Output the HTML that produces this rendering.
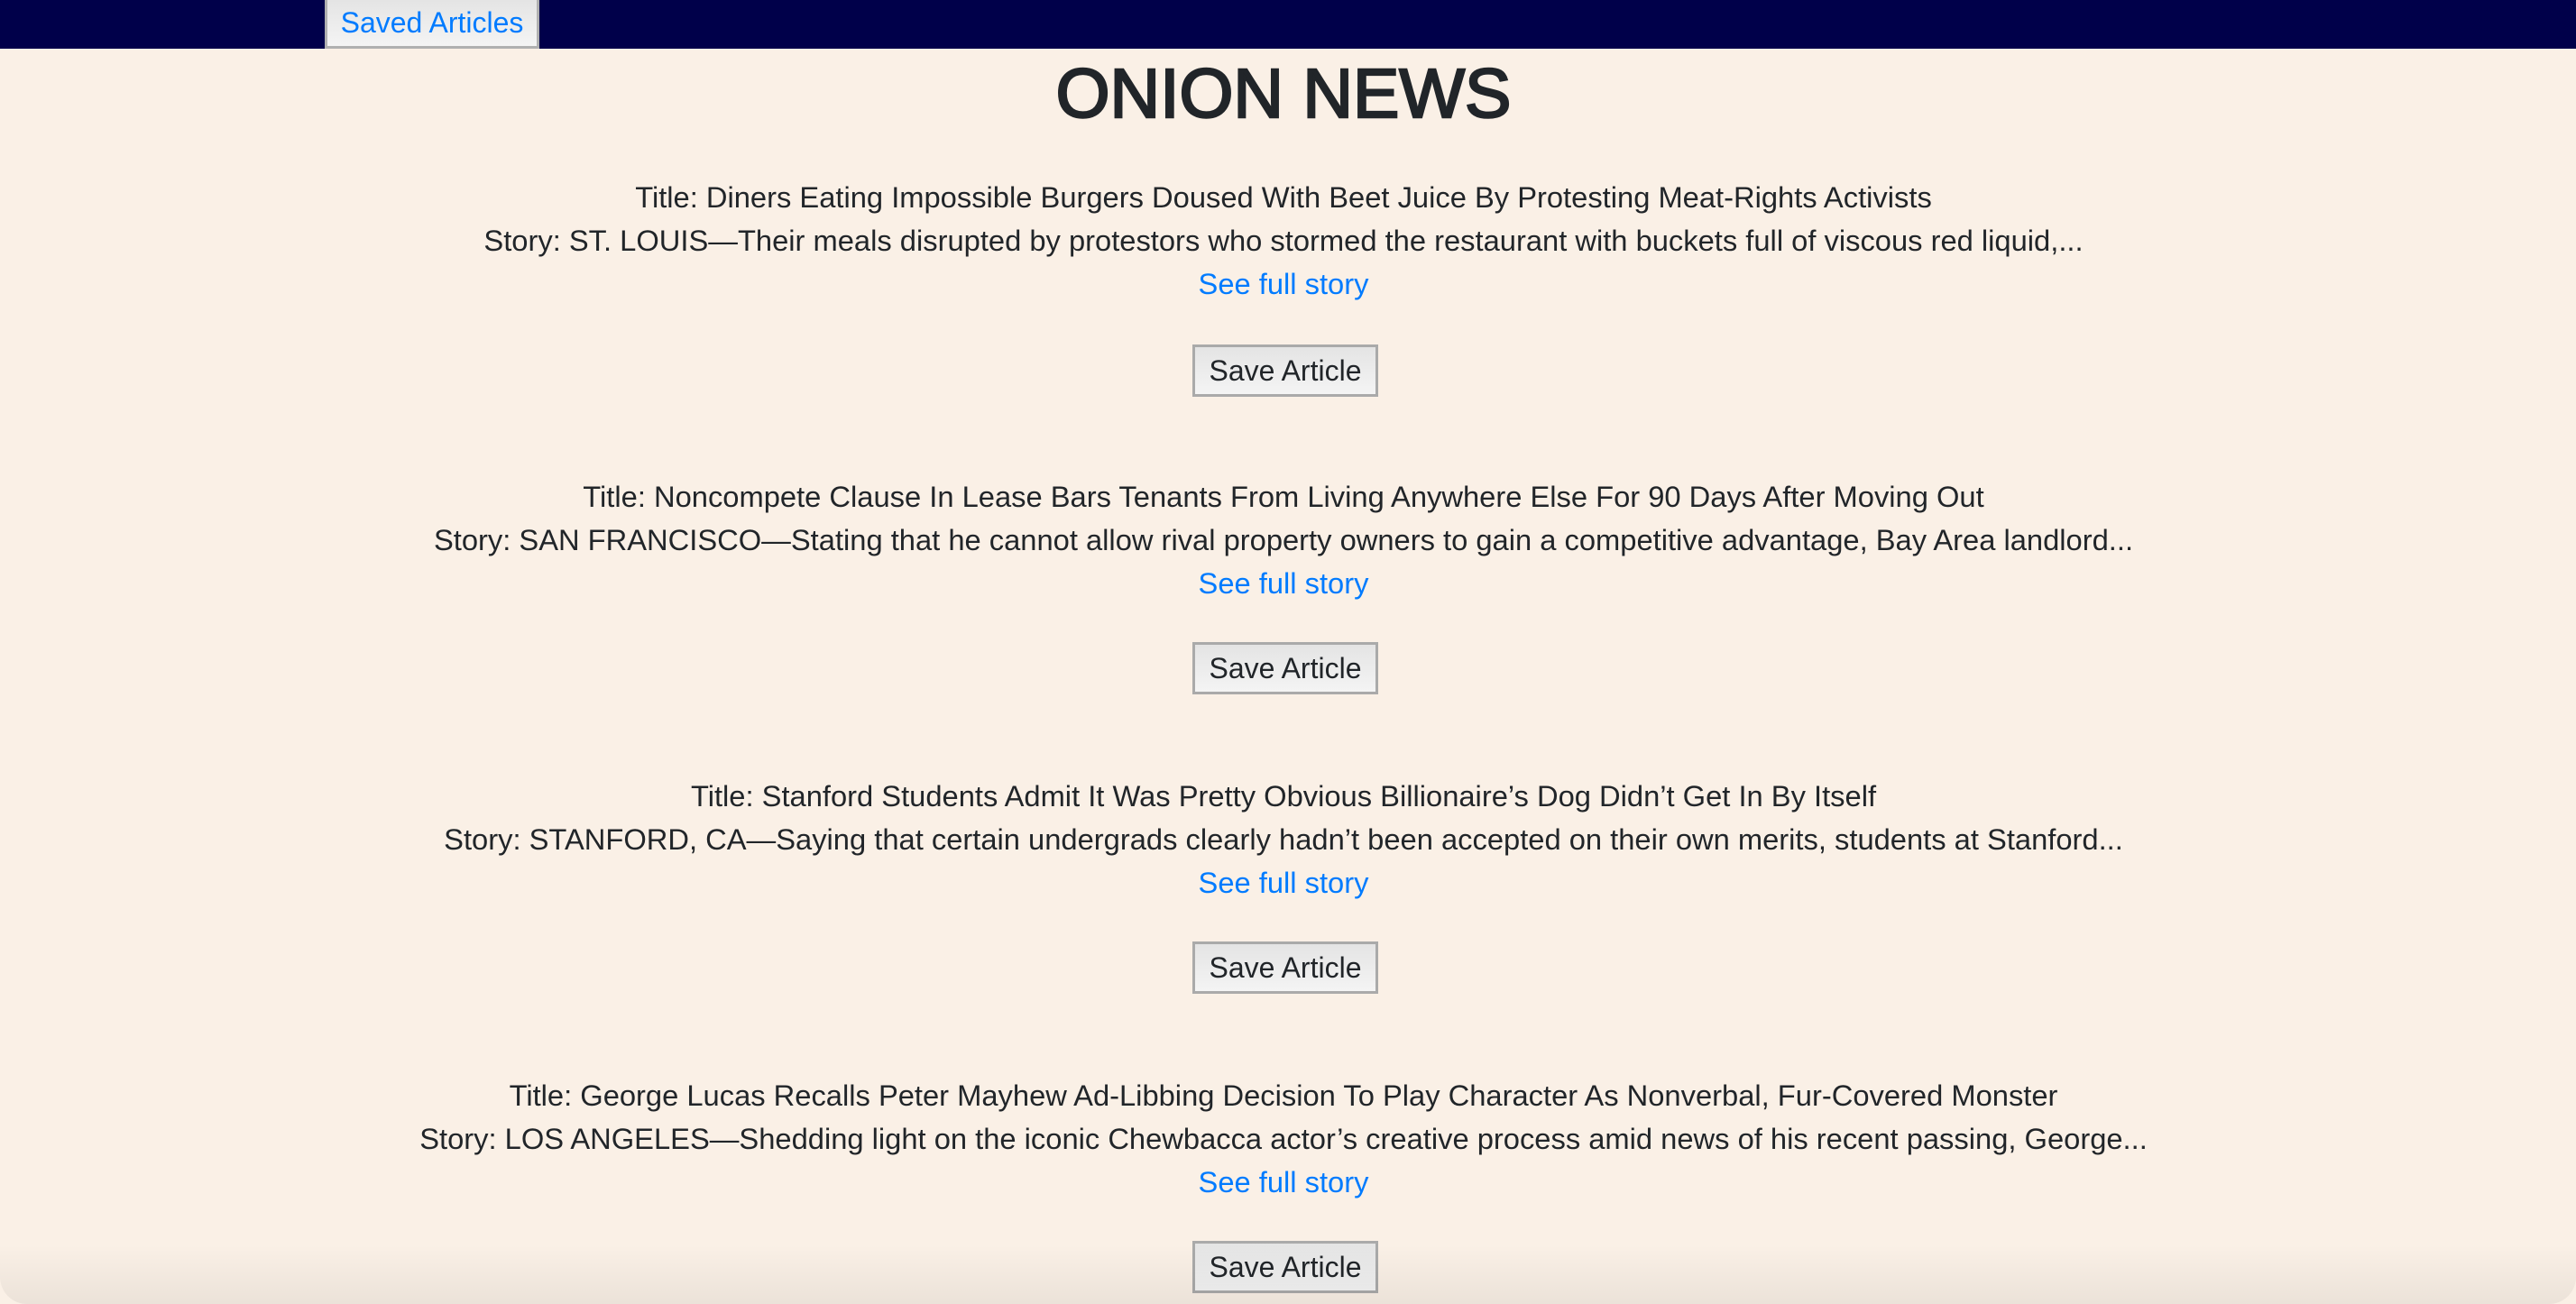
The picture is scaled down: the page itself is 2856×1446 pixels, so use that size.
<!DOCTYPE html>
<html><head><meta charset="utf-8"><style>
html,body{margin:0;padding:0}
body{width:2856px;height:1446px;background:#faf0e6;font-family:"Liberation Sans",sans-serif;color:#212529;position:relative;overflow:hidden}
.nav{position:absolute;left:0;top:0;width:2856px;height:54px;background:#00004a}
.navbtn{position:absolute;left:360px;top:0;width:238px;height:54px;box-sizing:border-box;border:3px solid #b0b0b0;border-top:0;background:linear-gradient(#e4e4e4,#f4f4f4);color:#007bff;font-size:32px;line-height:50px;text-align:center}
h1{position:absolute;left:0;width:2846px;top:58px;margin:0;text-align:center;font-size:77px;line-height:92px;font-weight:normal;color:#212529;-webkit-text-stroke:2.5px #212529}
.art{position:absolute;left:0;width:2846px;text-align:center;font-size:32.7px;line-height:48px}
.art a{color:#007bff;text-decoration:none}
.btn{position:absolute;left:1322px;width:206px;height:58px;box-sizing:border-box;border:3px solid #aaa;background:linear-gradient(#e4e4e4,#f4f4f4);font-size:32px;line-height:52px;text-align:center;color:#212529}
.shade{position:absolute;left:0;top:1380px;width:2856px;height:66px;background:linear-gradient(rgba(0,0,0,0),rgba(0,0,0,0.06));border-radius:0 0 30px 30px}
</style></head><body>
<div class="nav"><div class="navbtn">Saved Articles</div></div>
<h1>ONION NEWS</h1>

<div class="art" style="top:195px">Title: Diners Eating Impossible Burgers Doused With Beet Juice By Protesting Meat-Rights Activists<br>Story: ST. LOUIS—Their meals disrupted by protestors who stormed the restaurant with buckets full of viscous red liquid,...<br><a>See full story</a></div>
<div class="btn" style="top:382px">Save Article</div>

<div class="art" style="top:527px">Title: Noncompete Clause In Lease Bars Tenants From Living Anywhere Else For 90 Days After Moving Out<br>Story: SAN FRANCISCO—Stating that he cannot allow rival property owners to gain a competitive advantage, Bay Area landlord...<br><a>See full story</a></div>
<div class="btn" style="top:712px">Save Article</div>

<div class="art" style="top:859px">Title: Stanford Students Admit It Was Pretty Obvious Billionaire’s Dog Didn’t Get In By Itself<br>Story: STANFORD, CA—Saying that certain undergrads clearly hadn’t been accepted on their own merits, students at Stanford...<br><a>See full story</a></div>
<div class="btn" style="top:1044px">Save Article</div>

<div class="art" style="top:1191px">Title: George Lucas Recalls Peter Mayhew Ad-Libbing Decision To Play Character As Nonverbal, Fur-Covered Monster<br>Story: LOS ANGELES—Shedding light on the iconic Chewbacca actor’s creative process amid news of his recent passing, George...<br><a>See full story</a></div>
<div class="btn" style="top:1376px">Save Article</div>
<div class="shade"></div>
</body></html>
